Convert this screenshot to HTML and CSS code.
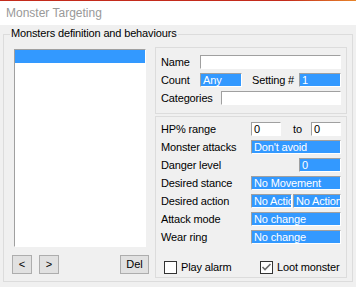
FILE: index.html
```html
<!DOCTYPE html>
<html lang="en">

<head>
    <meta charset="UTF-8">
    <meta name="viewport" content="width=device-width, initial-scale=1.0">
    <title>Monster Targeting</title>
    <link rel="stylesheet" href="styles.css">
</head>

<body>

    <div class="titlebar"><span class="title">Monster Targeting</span></div>

    <div class="window">
        <div class="group outer">
            <span class="legend">Monsters definition and behaviours</span>

            <!-- list of monsters -->
            <div class="left">
                <div class="listbox">
                    <div class="item sel"></div>
                </div>
                <div class="buttons">
                    <button class="btn small">&lt;</button>
                    <button class="btn small">&gt;</button>
                    <button class="btn del">Del</button>
                </div>
            </div>

            <!-- settings of the selected monster -->
            <div class="right">
                <div class="group box1">
                    <div class="row">
                        <span class="lbl lbl_short">Name</span>
                        <span class="field w_name"></span>
                    </div>
                    <div class="row">
                        <span class="lbl lbl_short">Count</span>
                        <span class="field sel w_small">Any</span>
                        <span class="setting">Setting #</span>
                        <span class="field sel w_small push">1</span>
                    </div>
                    <div class="row">
                        <span class="lbl lbl_cat">Categories</span>
                        <span class="field w_cat"></span>
                    </div>
                </div>

                <div class="group box2">
                    <div class="row">
                        <span class="lbl">HP% range</span>
                        <span class="field w_hp">0</span>
                        <span class="to">to</span>
                        <span class="field w_hp push">0</span>
                    </div>
                    <div class="row">
                        <span class="lbl">Monster attacks</span>
                        <span class="field sel w_full">Don't avoid</span>
                    </div>
                    <div class="row">
                        <span class="lbl">Danger level</span>
                        <span class="field sel w_small push">0</span>
                    </div>
                    <div class="row">
                        <span class="lbl">Desired stance</span>
                        <span class="field sel w_full">No Movement</span>
                    </div>
                    <div class="row">
                        <span class="lbl">Desired action</span>
                        <span class="field sel w_act1">No Action</span>
                        <span class="field sel w_act2">No Action</span>
                    </div>
                    <div class="row">
                        <span class="lbl">Attack mode</span>
                        <span class="field sel w_full">No change</span>
                    </div>
                    <div class="row">
                        <span class="lbl">Wear ring</span>
                        <span class="field sel w_full">No change</span>
                    </div>
                    <div class="checks">
                        <label class="check_item alarm">
                            <span class="check"></span><span class="check_lbl">Play alarm</span>
                        </label>
                        <label class="check_item">
                            <span class="check"><svg width="11" height="11" viewBox="0 0 11 11"><polyline points="1.5,5 4,7.5 9.5,2" fill="none" stroke="#6d6d6d" stroke-width="1.6"/></svg></span><span class="check_lbl">Loot monster</span>
                        </label>
                    </div>
                </div>
            </div>
        </div>
    </div>

</body>

</html>
```

FILE: styles.css
```css
* {
    box-sizing: border-box;
}

body {
    margin: 0;
    font-family: "Liberation Sans", Arial, sans-serif;
    font-size: 11px;
    letter-spacing: -0.15px;
    color: #000;
    background-color: #f0f0f0;
}

.titlebar {
    height: 25px;
    background-color: #fff;
    border-top: 1px solid #c42b1c;
    border-image: linear-gradient(to right, #c42b1c, #c42b1c 80%, #e8862a) 1;
    padding-left: 6px;
    font-size: 12px;
    letter-spacing: 0;
    line-height: 24px;
    color: #999;
}

.window {
    height: 262px;
    padding: 9px 0 0 3px;
}

.group {
    border: 1px solid #dcdcdc;
}

.outer {
    position: relative;
    display: flex;
    gap: 6px;
    width: 350px;
    height: 248px;
    padding: 0 5px 0 8px;
}

.legend {
    position: absolute;
    top: -8px;
    left: 6px;
    padding: 0 1px;
    line-height: 13px;
    background-color: #f0f0f0;
}

.left {
    display: flex;
    flex-direction: column;
    width: 137px;
}

.listbox {
    width: 132px;
    height: 198px;
    margin: 14px 0 0 2px;
    background-color: #fff;
    border: 1px solid;
    border-color: #a0a0a0 #fff #fff #a0a0a0;
}

.item {
    height: 13px;
}

.item.sel {
    background-color: #3399ff;
}

.buttons {
    display: flex;
    margin-top: 8px;
}

.btn {
    width: 20px;
    height: 19px;
    padding: 0;
    font: inherit;
    line-height: 17px;
    text-align: center;
    color: #000;
    background-color: #e1e1e1;
    border: 1px solid #adadad;
}

.btn + .btn {
    margin-left: 7px;
}

.btn.del {
    width: 29px;
    margin-left: auto;
}

.right {
    display: flex;
    flex-direction: column;
    gap: 2px;
    width: 192px;
    padding-top: 12px;
}

.box1 {
    display: flex;
    flex-direction: column;
    gap: 4px;
    height: 67px;
    padding: 7px 5px 0;
}

.box2 {
    display: flex;
    flex-direction: column;
    gap: 4px;
    height: 162px;
    padding: 5px 5px 0;
}

.row {
    display: flex;
    align-items: center;
    height: 14px;
    line-height: 14px;
    white-space: nowrap;
}

.lbl {
    width: 90px;
}

.lbl_short {
    width: 39px;
}

.lbl_cat {
    width: 60px;
}

.field {
    height: 14px;
    padding-left: 2px;
    line-height: 12px;
    white-space: nowrap;
    overflow: hidden;
    background-color: #fff;
    border: 1px solid;
    border-color: #a0a0a0 #fff #fff #a0a0a0;
}

.field.sel {
    color: #fff;
    background-color: #3399ff;
}

.push {
    margin-left: auto;
}

.w_name {
    width: 141px;
}

.w_small {
    width: 42px;
}

.w_cat {
    width: 120px;
}

.w_hp {
    width: 30px;
}

.w_full {
    width: 90px;
}

.w_act1 {
    width: 41px;
    margin-right: 1px;
}

.w_act2 {
    width: 48px;
}

.setting {
    margin-left: 10px;
}

.to {
    margin-left: 12px;
}

.checks {
    display: flex;
    align-items: center;
    height: 13px;
    margin-top: 13px;
    line-height: 13px;
}

.check_item {
    display: flex;
    align-items: center;
    white-space: nowrap;
}

.check_item.alarm {
    width: 96px;
    margin-left: 3px;
}

.check {
    display: flex;
    align-items: center;
    justify-content: center;
    width: 13px;
    height: 13px;
    background-color: #fff;
    border: 1px solid #333;
}

.check_lbl {
    margin-left: 4px;
}
```
